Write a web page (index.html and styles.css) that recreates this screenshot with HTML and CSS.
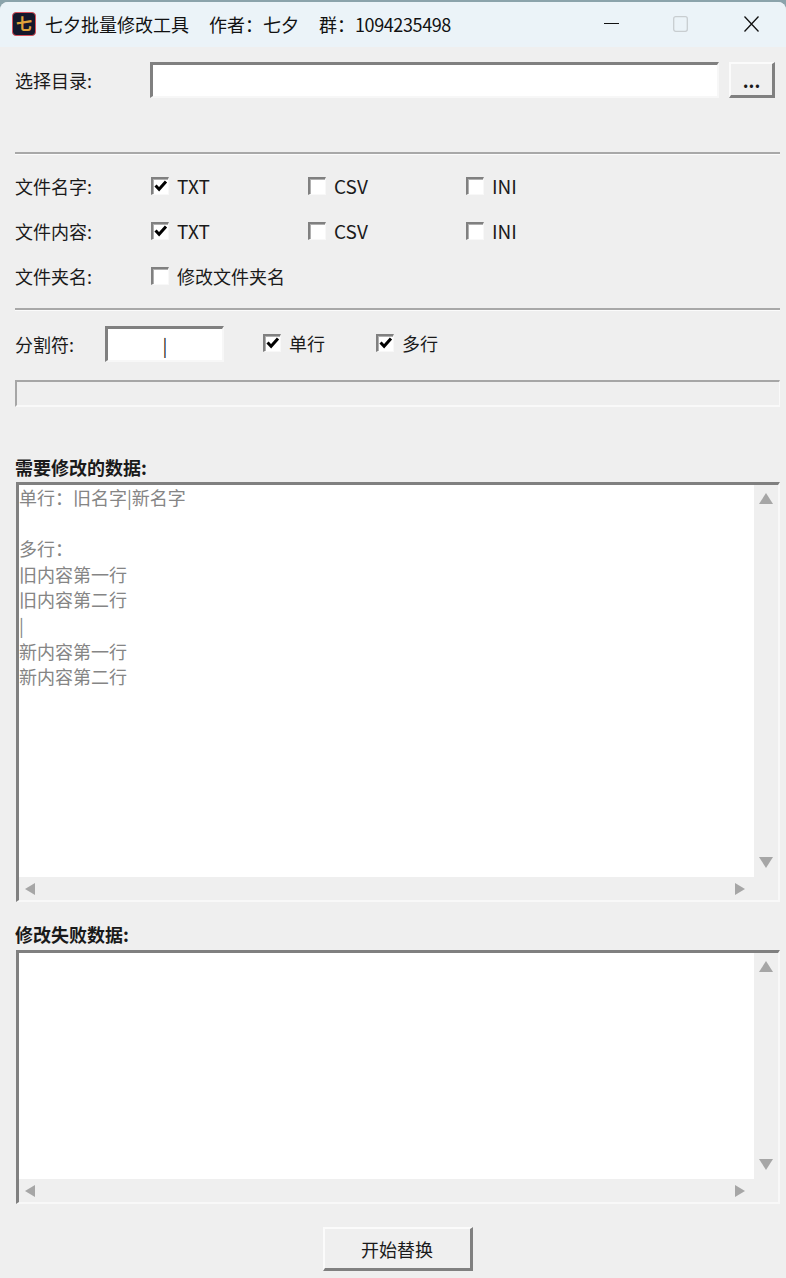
FILE: index.html
```html
<!DOCTYPE html>
<html lang="zh-CN">
<head>
    <meta charset="UTF-8">
    <title>七夕批量修改工具</title>
    <link rel="stylesheet" href="styles.css">
</head>
<body>
    <div class="window">
        <div class="titlebar">
            <div class="app-icon">七</div>
            <div class="title-text">
                <span>七夕批量修改工具</span>
                <span>作者：七夕</span>
                <span>群：<span class="qq">1094235498</span></span>
            </div>
            <div class="win-controls">
                <svg class="win-btn" width="15" height="16" viewBox="0 0 15 16"><path d="M0 7.5h15" stroke="#111" stroke-width="1.2"/></svg>
                <svg class="win-btn win-max" width="15" height="16" viewBox="0 0 15 16"><rect x="0.7" y="0.7" width="13.6" height="14.6" rx="2" fill="none" stroke="#c8cdd0" stroke-width="1.3"/></svg>
                <svg class="win-btn" width="15" height="16" viewBox="0 0 15 16"><path d="M0.5 0.5l14 15M14.5 0.5l-14 15" stroke="#111" stroke-width="1.3"/></svg>
            </div>
        </div>

        <div class="content">
            <div class="dir-row">
                <label class="field-label">选择目录:</label>
                <input class="sunken dir-input" type="text">
                <button class="raised browse-btn">...</button>
            </div>

            <div class="divider first-divider"></div>

            <div class="option-grid">
                <span class="field-label">文件名字:</span>
                <span class="check"><span class="box on"><svg width="14" height="14" viewBox="0 0 14 14"><path d="M1.5 6.5l3.6 3.8L12 2.5" fill="none" stroke="#000" stroke-width="3"/></svg></span><span class="latin">TXT</span></span>
                <span class="check"><span class="box"></span><span class="latin">CSV</span></span>
                <span class="check"><span class="box"></span><span class="latin">INI</span></span>

                <span class="field-label">文件内容:</span>
                <span class="check"><span class="box on"><svg width="14" height="14" viewBox="0 0 14 14"><path d="M1.5 6.5l3.6 3.8L12 2.5" fill="none" stroke="#000" stroke-width="3"/></svg></span><span class="latin">TXT</span></span>
                <span class="check"><span class="box"></span><span class="latin">CSV</span></span>
                <span class="check"><span class="box"></span><span class="latin">INI</span></span>

                <span class="field-label">文件夹名:</span>
                <span class="check wide"><span class="box"></span>修改文件夹名</span>
            </div>

            <div class="divider"></div>

            <div class="split-row">
                <label class="field-label split-label">分割符:</label>
                <input class="sunken split-input" type="text" value="|">
                <span class="check split-check"><span class="box on"><svg width="14" height="14" viewBox="0 0 14 14"><path d="M1.5 6.5l3.6 3.8L12 2.5" fill="none" stroke="#000" stroke-width="3"/></svg></span>单行</span>
                <span class="check split-check"><span class="box on"><svg width="14" height="14" viewBox="0 0 14 14"><path d="M1.5 6.5l3.6 3.8L12 2.5" fill="none" stroke="#000" stroke-width="3"/></svg></span>多行</span>
            </div>

            <div class="progress"></div>

            <div class="section-label data-label">需要修改的数据:</div>
            <div class="textbox data-box">
                <div class="pane placeholder">单行：旧名字|新名字

多行：
旧内容第一行
旧内容第二行
|
新内容第一行
新内容第二行</div>
                <div class="vbar"><i class="arrow up"></i><i class="arrow down"></i></div>
                <div class="hbar"><i class="arrow left"></i><i class="arrow right"></i></div>
            </div>

            <div class="section-label fail-label">修改失败数据:</div>
            <div class="textbox fail-box">
                <div class="pane"></div>
                <div class="vbar"><i class="arrow up"></i><i class="arrow down"></i></div>
                <div class="hbar"><i class="arrow left"></i><i class="arrow right"></i></div>
            </div>

            <div class="footer">
                <button class="raised start-btn">开始替换</button>
            </div>
        </div>
    </div>
</body>
</html>
```

FILE: styles.css
```css
:root {
    --face: #efefef;
    --shadow: #808080;
    --light: #fbfbfb;
    --arrow: #a6a6a6;
}

html { background: #8ba3ab; }

body {
    margin: 0;
    font-family: "Noto Sans CJK SC", "Noto Sans", sans-serif;
    font-size: 18px;
    color: #1a1a1a;
}

.window {
    height: 1276px;
    margin-top: 2px;
    background: var(--face);
    border-radius: 8px 8px 0 0;
    overflow: hidden;
}

.titlebar {
    display: flex;
    align-items: center;
    height: 43px;
    padding: 0 0 2px 12px;
    background: #ebf3f8;
}

.app-icon {
    box-sizing: border-box;
    width: 24px;
    height: 24px;
    margin-right: 9px;
    background: #14182c;
    border: 1px solid #d8505a;
    border-radius: 4px;
    color: #dfa33a;
    font-size: 16px;
    font-weight: 700;
    line-height: 21px;
    text-align: center;
}

.title-text { display: flex; flex: 1; gap: 20px; color: #111; }
.qq { letter-spacing: -0.4px; }

.win-controls { display: flex; margin-right: 27px; gap: 55px; }
.win-btn { display: block; }
.win-max { margin: 0 1px 0 -1px; }

.content { padding: 15px 6px 0 15px; }

.field-label { white-space: nowrap; }

/* classic sunken / raised win32 borders */
.sunken {
    box-sizing: border-box;
    background: #fff;
    border-style: solid;
    border-width: 3px 2px 2px 3px;
    border-color: var(--shadow) #f7f7f7 #f7f7f7 var(--shadow);
    outline: none;
    border-radius: 0;
    font: inherit;
    color: #222;
}

.raised {
    box-sizing: border-box;
    background: var(--face);
    border-style: solid;
    border-width: 2px 3px 3px 2px;
    border-color: var(--light) var(--shadow) var(--shadow) var(--light);
    border-radius: 0;
    padding: 0;
    font: inherit;
    color: #1a1a1a;
}

.dir-row { display: flex; align-items: center; height: 36px; }
.dir-row .field-label { width: 135px; }
.dir-input { width: 569px; height: 36px; margin-right: 10px; }
.browse-btn { width: 46px; height: 36px; line-height: 30px; font-weight: 700; }

.divider {
    height: 2px;
    background: #a8a8a8;
    border-bottom: 1px solid #fbfbfb;
}
.first-divider { margin-top: 54px; }

.option-grid {
    display: grid;
    grid-template-columns: 136px 157px 158px 1fr;
    grid-auto-rows: 45px;
    align-items: center;
    padding-top: 8px;
    height: 153px;
    box-sizing: border-box;
}

.check { display: flex; align-items: center; gap: 8px; line-height: 24px; }
.wide { grid-column: 2 / 5; }
.latin { font-size: 19px; }

.box {
    box-sizing: border-box;
    display: flex;
    align-items: center;
    justify-content: center;
    width: 18px;
    height: 18px;
    background: #fff;
    border-style: solid;
    border-width: 2px 1px 1px 2px;
    border-color: var(--shadow) #f8f8f8 #f8f8f8 var(--shadow);
    box-shadow: inset 1px 1px 0 #b0b0b0;
}

.split-row { display: flex; align-items: center; height: 36px; margin-top: 15px; }
.split-label { width: 90px; }
.split-input { width: 119px; height: 36px; margin-right: 39px; text-align: center; }
.split-check { margin-right: 51px; margin-bottom: 3px; }

.progress {
    box-sizing: border-box;
    height: 27px;
    margin-top: 18px;
    border-style: solid;
    border-width: 2px 1px 2px 2px;
    border-color: #a6a6a6 #f9f9f9 #f9f9f9 #a6a6a6;
}

.section-label {
    font-weight: 700;
    line-height: 26px;
}
.data-label { margin-top: 47px; }
.fail-label { margin-top: 19px; }

.textbox {
    box-sizing: border-box;
    display: grid;
    grid-template-columns: 1fr 24px;
    grid-template-rows: 1fr 23px;
    margin-left: 1px;
    border-style: solid;
    border-width: 3px 2px 2px 3px;
    border-color: var(--shadow) #f8f8f8 #f8f8f8 var(--shadow);
}
.data-box { height: 420px; margin-top: 2px; }
.fail-box { height: 254px; margin-top: 3px; }

.pane { background: #fff; }

.placeholder {
    line-height: 25.6px;
    color: #858585;
    white-space: pre;
}

.vbar, .hbar {
    display: flex;
    justify-content: space-between;
}
.vbar { flex-direction: column; align-items: center; padding: 8px 0 9px; }
.hbar { grid-column: 1 / 3; align-items: center; padding: 0 33px 0 6px; }

.arrow { display: block; width: 0; height: 0; border-style: solid; border-color: transparent; }
.arrow.up { border-width: 0 7px 11px; border-bottom-color: var(--arrow); }
.arrow.down { border-width: 11px 7px 0; border-top-color: var(--arrow); }
.arrow.left { border-width: 6px 10px 6px 0; border-right-color: var(--arrow); }
.arrow.right { border-width: 6px 0 6px 10px; border-left-color: var(--arrow); }

.footer { display: flex; justify-content: center; margin-top: 23px; }
.start-btn { width: 150px; height: 44px; }
```
